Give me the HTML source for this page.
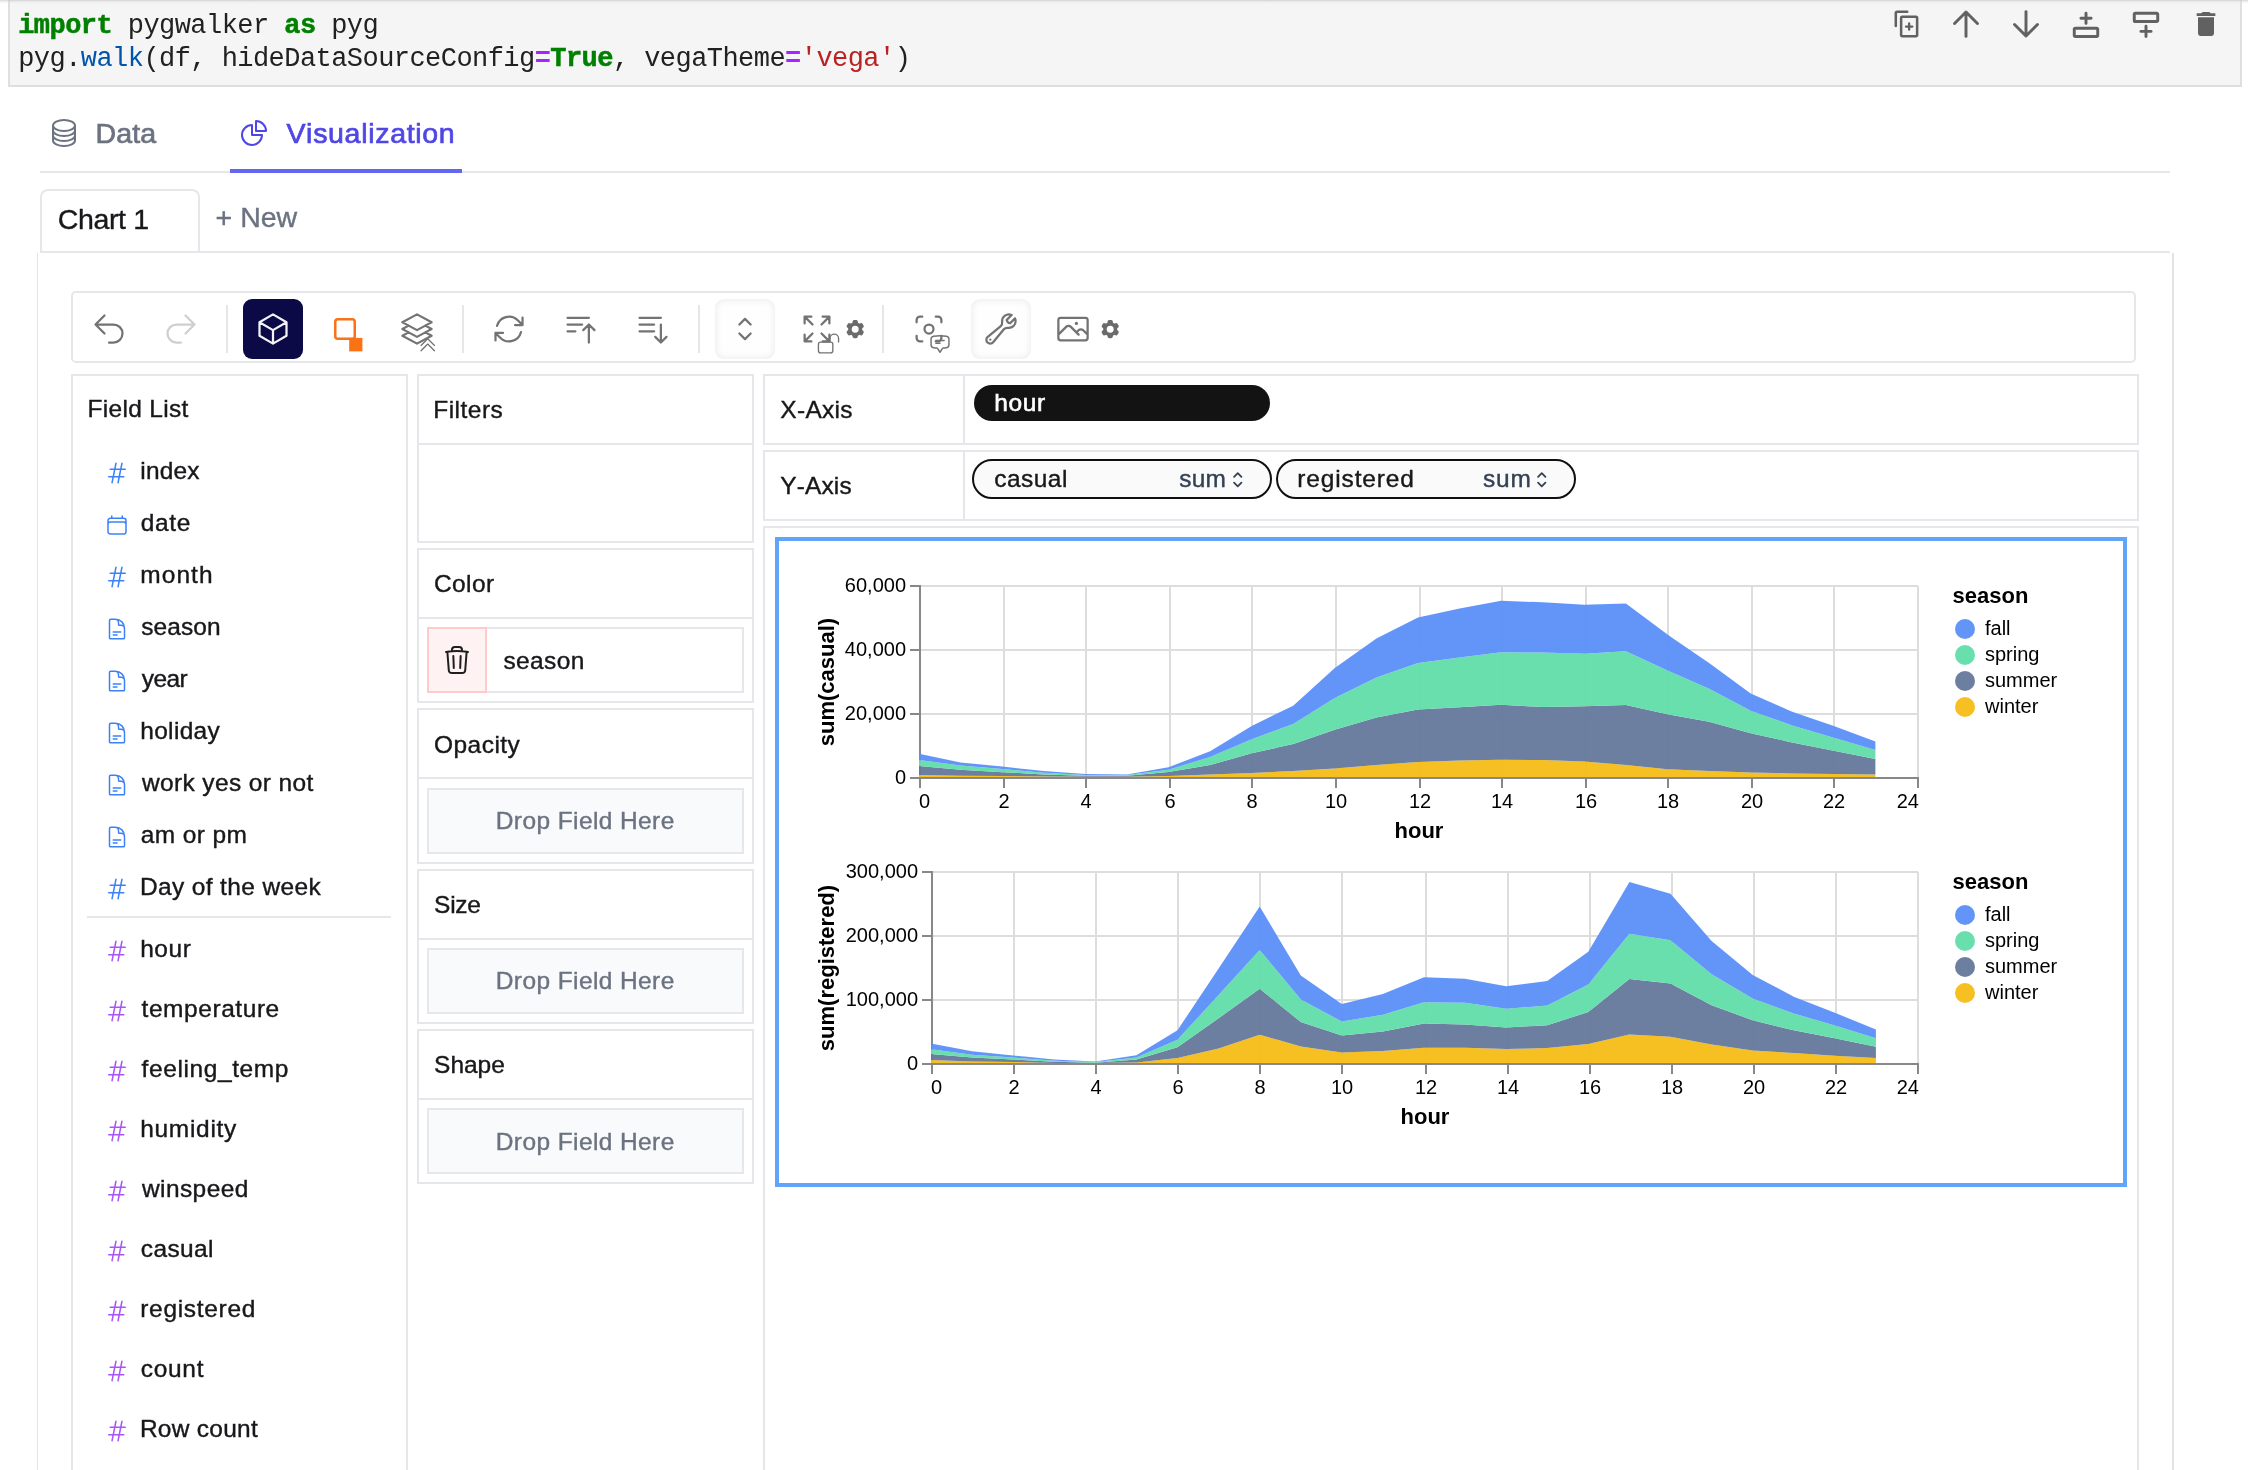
<!DOCTYPE html>
<html><head><meta charset="utf-8"><title>PyGWalker</title>
<style>
html,body{margin:0;padding:0;background:#fff;overflow:hidden;}
body{width:2248px;height:1470px;position:relative;overflow:hidden;font-family:"Liberation Sans",sans-serif;}
</style></head><body><div style="position:absolute;left:0;top:0;width:2248px;height:1470px;overflow:hidden;will-change:transform;transform:translateZ(0);">
<div style="position:absolute;left:8px;top:-2px;width:2234px;height:89px;box-sizing:border-box;background:#f5f5f5;border:2px solid #dfdfdf;"></div>
<div style="position:absolute;left:0px;top:0px;width:2248px;height:4px;box-sizing:border-box;background:linear-gradient(rgba(200,200,200,0.75),rgba(225,225,225,0.3) 50%,rgba(240,240,240,0));"></div>
<div style="position:absolute;left:18.2px;top:8.5px;font-family:'Liberation Mono',monospace;font-size:27px;letter-spacing:-0.553px;line-height:34px;white-space:pre;color:#212121;"><span style="color:#008000;font-weight:bold;-webkit-text-stroke:0.5px #008000">import</span> pygwalker <span style="color:#008000;font-weight:bold;-webkit-text-stroke:0.5px #008000">as</span> pyg</div>
<div style="position:absolute;left:18.2px;top:42.3px;font-family:'Liberation Mono',monospace;font-size:27px;letter-spacing:-0.553px;line-height:34px;white-space:pre;color:#212121;">pyg.<span style="color:#0055aa">walk</span>(df, hideDataSourceConfig<span style="color:#aa22ff;font-weight:bold">=</span><span style="color:#008000;font-weight:bold;-webkit-text-stroke:0.5px #008000">True</span>, vegaTheme<span style="color:#aa22ff;font-weight:bold">=</span><span style="color:#ba2121">'vega'</span>)</div>
<svg style="position:absolute;left:1890.7px;top:8.399999999999999px;overflow:visible" width="32" height="32" viewBox="0 0 24 24" ><path fill="none" stroke="#616161" stroke-width="1.9" stroke-linejoin="round" stroke-linecap="round" d="M3.6 13.5V3.8a1 1 0 0 1 1-1h7.6M8.4 6.6h10.4a.8.8 0 0 1 .8.8v13a.8.8 0 0 1-.8.8H8.4a.8.8 0 0 1-.8-.8v-13a.8.8 0 0 1 .8-.8z"/><path stroke="#616161" stroke-width="1.7" stroke-linecap="round" d="M11.2 13.9h4.8M13.6 11.5v4.8"/></svg>
<svg style="position:absolute;left:1950px;top:8px;overflow:visible" width="32" height="32" viewBox="0 0 24 24" ><path fill="none" stroke="#616161" stroke-width="2.2" stroke-linecap="round" stroke-linejoin="round" d="M12 21.3V3.2M3.4 11.6 12 3l8.6 8.6"/></svg>
<svg style="position:absolute;left:2010px;top:8px;overflow:visible" width="32" height="32" viewBox="0 0 24 24" ><path fill="none" stroke="#616161" stroke-width="2.2" stroke-linecap="round" stroke-linejoin="round" d="M12 2.7v18.1M3.4 12.4 12 21l8.6-8.6"/></svg>
<svg style="position:absolute;left:2070px;top:8.5px;overflow:visible" width="32" height="32" viewBox="0 0 24 24" ><path fill="none" stroke="#616161" stroke-width="2.2" stroke-linecap="round" stroke-linejoin="round" d="M4 14.4h16a.8.8 0 0 1 .8.8v4.6a.8.8 0 0 1-.8.8H4a.8.8 0 0 1-.8-.8v-4.6a.8.8 0 0 1 .8-.8zM12 3.2v7.6M8.2 7h7.6"/></svg>
<svg style="position:absolute;left:2130px;top:9px;overflow:visible" width="32" height="32" viewBox="0 0 24 24" ><path fill="none" stroke="#616161" stroke-width="2.2" stroke-linecap="round" stroke-linejoin="round" d="M4 3.2h16a.8.8 0 0 1 .8.8v4.6a.8.8 0 0 1-.8.8H4a.8.8 0 0 1-.8-.8V4a.8.8 0 0 1 .8-.8zM12 13v7.6M8.2 16.8h7.6"/></svg>
<svg style="position:absolute;left:2190px;top:8px;overflow:visible" width="32" height="32" viewBox="0 0 24 24" ><path fill="#616161" d="M6 19c0 1.1.9 2 2 2h8c1.1 0 2-.9 2-2V7H6v12zM19 4h-3.5l-1-1h-5l-1 1H5v2h14V4z"/></svg>
<div style="position:absolute;left:40px;top:171px;width:2130px;height:2px;box-sizing:border-box;background:#e5e7eb;"></div>
<div style="position:absolute;left:230px;top:169px;width:232px;height:4px;box-sizing:border-box;background:#6366f1;"></div>
<svg style="position:absolute;left:48.0px;top:117.0px;overflow:visible" width="32" height="32" viewBox="0 0 24 24" fill="none" stroke="#6b7280" stroke-width="1.5" ><path d="M20.25 6.375c0 2.278-3.694 4.125-8.25 4.125S3.75 8.653 3.75 6.375m16.5 0c0-2.278-3.694-4.125-8.25-4.125S3.75 4.097 3.75 6.375m16.5 0v11.25c0 2.278-3.694 4.125-8.25 4.125s-8.25-1.847-8.25-4.125V6.375m16.5 0v3.75m-16.5-3.75v3.75m16.5 0v3.75C20.25 16.153 16.556 18 12 18s-8.25-1.847-8.25-4.125v-3.75m16.5 0c0 2.278-3.694 4.125-8.25 4.125s-8.25-1.847-8.25-4.125" stroke-linecap="round" stroke-linejoin="round"/></svg>
<svg style="position:absolute;left:238.0px;top:117.0px;overflow:visible" width="32" height="32" viewBox="0 0 24 24" fill="none" stroke="#4f46e5" stroke-width="1.5" ><path d="M10.5 6a7.5 7.5 0 1 0 7.5 7.5h-7.5V6Z" stroke-linecap="round" stroke-linejoin="round"/><path d="M13.5 10.5H21A7.5 7.5 0 0 0 13.5 3v7.5Z" stroke-linecap="round" stroke-linejoin="round"/></svg>
<div style="position:absolute;left:95.41px;top:117px;white-space:pre;line-height:32px;height:32px;font-kerning:none;font-family:'Liberation Sans',sans-serif;font-size:28.56px;font-weight:400;color:#6b7280;letter-spacing:0.172px;-webkit-text-stroke:0.7px #6b7280;">Data</div>
<div style="position:absolute;left:286.42px;top:117px;white-space:pre;line-height:32px;height:32px;font-kerning:none;font-family:'Liberation Sans',sans-serif;font-size:28.56px;font-weight:400;color:#4f46e5;letter-spacing:0.670px;-webkit-text-stroke:0.7px #4f46e5;">Visualization</div>
<div style="position:absolute;left:40px;top:189px;width:160px;height:63px;box-sizing:border-box;background:#fff;border:2px solid #e5e7eb;border-bottom:none;border-radius:8px 8px 0 0;"></div>
<div style="position:absolute;left:40px;top:251px;width:2130px;height:2px;box-sizing:border-box;background:#e5e7eb;"></div>
<div style="position:absolute;left:57.65px;top:203px;white-space:pre;line-height:32px;height:32px;font-kerning:none;font-family:'Liberation Sans',sans-serif;font-size:28.56px;font-weight:400;color:#18181b;letter-spacing:-0.352px;-webkit-text-stroke:0.4px #18181b;">Chart 1</div>
<div style="position:absolute;left:215.61px;top:201px;white-space:pre;line-height:32px;height:32px;font-kerning:none;font-family:'Liberation Sans',sans-serif;font-size:28.56px;font-weight:400;color:#6b7280;letter-spacing:-0.031px;-webkit-text-stroke:0.4px #6b7280;">+ New</div>
<div style="position:absolute;left:36.5px;top:253px;width:1.5px;height:1300px;box-sizing:border-box;background:#e3e4e8;"></div>
<div style="position:absolute;left:2172px;top:253px;width:1.5px;height:1300px;box-sizing:border-box;background:#e3e4e8;"></div>
<div style="position:absolute;left:71px;top:291px;width:2065px;height:72px;box-sizing:border-box;border:2px solid #e5e7eb;border-radius:5px;background:#fff;"></div>
<div style="position:absolute;left:226px;top:305px;width:2px;height:48px;box-sizing:border-box;background:#e7e7e8;"></div>
<div style="position:absolute;left:462px;top:305px;width:2px;height:48px;box-sizing:border-box;background:#e7e7e8;"></div>
<div style="position:absolute;left:698px;top:305px;width:2px;height:48px;box-sizing:border-box;background:#e7e7e8;"></div>
<div style="position:absolute;left:882px;top:305px;width:2px;height:48px;box-sizing:border-box;background:#e7e7e8;"></div>
<div style="position:absolute;left:243px;top:298.8px;width:60px;height:60px;box-sizing:border-box;background:#0b0a46;border-radius:9px;"></div>
<div style="position:absolute;left:715px;top:299px;width:60px;height:60px;box-sizing:border-box;background:#fefefe;border-radius:9px;box-shadow:inset 0 0 7px 1px rgba(0,0,0,0.075);"></div>
<div style="position:absolute;left:971px;top:299px;width:60px;height:60px;box-sizing:border-box;background:#fefefe;border-radius:9px;box-shadow:inset 0 0 7px 1px rgba(0,0,0,0.075);"></div>
<svg style="position:absolute;left:91.0px;top:310.8px;overflow:visible" width="36" height="36" viewBox="0 0 24 24" fill="none" stroke="#737373" stroke-width="1.5" ><path d="M9 15 3 9m0 0 6-6M3 9h12a6 6 0 0 1 0 12h-3" stroke-linecap="round" stroke-linejoin="round"/></svg>
<svg style="position:absolute;left:163.0px;top:310.8px;overflow:visible" width="36" height="36" viewBox="0 0 24 24" fill="none" stroke="#cfcfcf" stroke-width="1.5" ><path d="m15 15 6-6m0 0-6-6m6 6H9a6 6 0 0 0 0 12h3" stroke-linecap="round" stroke-linejoin="round"/></svg>
<svg style="position:absolute;left:255.0px;top:310.8px;overflow:visible" width="36" height="36" viewBox="0 0 24 24" fill="none" stroke="#f3f3f7" stroke-width="1.5" ><path d="m21 7.5-9-5.25L3 7.5m18 0-9 5.25m9-5.25v9l-9 5.25M3 7.5l9 5.25M3 7.5v9l9 5.25m0-9v9" stroke-linecap="round" stroke-linejoin="round"/></svg>
<svg style="position:absolute;left:327px;top:310.8px;overflow:visible" width="36" height="36" viewBox="0 0 24 24" ><rect x="5.5" y="5.57" width="13" height="13" rx="1.7" fill="none" stroke="#f97316" stroke-width="1.67"/><rect x="14.8" y="17.93" width="8.8" height="9" fill="#f97316"/></svg>
<svg style="position:absolute;left:399.0px;top:310.8px;overflow:visible" width="36" height="36" viewBox="0 0 24 24" fill="none" stroke="#737373" stroke-width="1.5" ><path d="M6.429 9.75 2.25 12l4.179 2.25m0-4.5 5.571 3 5.571-3m-11.142 0L2.25 7.5 12 2.25l9.75 5.25-4.179 2.25m0 0L21.75 12l-4.179 2.25m0 0 4.179 2.25L12 21.75 2.25 16.5l4.179-2.25m11.142 0-5.571 3-5.571-3" stroke-linecap="round" stroke-linejoin="round"/></svg>
<svg style="position:absolute;left:417.4px;top:333.75px;overflow:visible" width="21.5" height="21.5" viewBox="0 0 24 24" fill="none" stroke="#737373" stroke-width="1.45" ><path d="m4.5 18.75 7.5-7.5 7.5 7.5" stroke-linecap="round" stroke-linejoin="round"/><path d="m4.5 12.75 7.5-7.5 7.5 7.5" stroke-linecap="round" stroke-linejoin="round"/></svg>
<svg style="position:absolute;left:491.0px;top:310.8px;overflow:visible" width="36" height="36" viewBox="0 0 24 24" fill="none" stroke="#737373" stroke-width="1.5" ><path d="M16.023 9.348h4.992v-.001M2.985 19.644v-4.992m0 0h4.992m-4.993 0 3.181 3.183a8.25 8.25 0 0 0 13.803-3.7M4.031 9.865a8.25 8.25 0 0 1 13.803-3.7l3.181 3.182m0-4.991v4.99" stroke-linecap="round" stroke-linejoin="round"/></svg>
<svg style="position:absolute;left:563.0px;top:310.8px;overflow:visible" width="36" height="36" viewBox="0 0 24 24" fill="none" stroke="#737373" stroke-width="1.5" ><path d="M3 4.5h14.25M3 9h9.75M3 13.5h5.25m5.25-.75L17.25 9m0 0L21 12.75M17.25 9v12" stroke-linecap="round" stroke-linejoin="round"/></svg>
<svg style="position:absolute;left:635.0px;top:310.8px;overflow:visible" width="36" height="36" viewBox="0 0 24 24" fill="none" stroke="#737373" stroke-width="1.5" ><path d="M3 4.5h14.25M3 9h9.75M3 13.5h9.75m4.5-4.5v12m0 0-3.75-3.75M17.25 21 21 17.25" stroke-linecap="round" stroke-linejoin="round"/></svg>
<svg style="position:absolute;left:727.0px;top:310.8px;overflow:visible" width="36" height="36" viewBox="0 0 24 24" fill="none" stroke="#737373" stroke-width="1.5" ><path d="M8.25 15 12 18.75 15.75 15m-7.5-6L12 5.25 15.75 9" stroke-linecap="round" stroke-linejoin="round"/></svg>
<svg style="position:absolute;left:799.0px;top:310.8px;overflow:visible" width="36" height="36" viewBox="0 0 24 24" fill="none" stroke="#737373" stroke-width="1.5" ><path d="M3.75 3.75v4.5m0-4.5h4.5m-4.5 0L9 9M3.75 20.25v-4.5m0 4.5h4.5m-4.5 0L9 15M20.25 3.75h-4.5m4.500 0v4.5m0-4.5L15 9m5.25 11.250h-4.5m4.5 0v-4.5m0 4.5L15 15" stroke-linecap="round" stroke-linejoin="round"/></svg>
<svg style="position:absolute;left:816.6px;top:332.1px;overflow:visible" width="23" height="23" viewBox="0 0 24 24" fill="none" stroke="#737373" stroke-width="1.4" ><path d="M13.5 10.5V6.75a4.5 4.5 0 1 1 9 0v3.75M3.75 21.75h10.5a2.25 2.25 0 0 0 2.25-2.25v-6.75a2.25 2.25 0 0 0-2.25-2.25H3.75a2.25 2.25 0 0 0-2.25 2.25v6.75a2.25 2.25 0 0 0 2.25 2.25Z" stroke-linecap="round" stroke-linejoin="round"/></svg>
<svg style="position:absolute;left:843.5999999999999px;top:317.90000000000003px;overflow:visible" width="22.4" height="22.4" viewBox="0 0 24 24" ><path fill="#6b6b6b" fill-rule="evenodd" clip-rule="evenodd" d="M11.078 2.25c-.917 0-1.699.663-1.85 1.567L9.05 4.889c-.02.12-.115.26-.297.348a7.493 7.493 0 0 0-.986.57c-.166.115-.334.126-.45.083L6.3 5.508a1.875 1.875 0 0 0-2.282.819l-.922 1.597a1.875 1.875 0 0 0 .432 2.385l.84.692c.095.078.17.229.154.43a7.598 7.598 0 0 0 0 1.139c.015.2-.059.352-.153.43l-.841.692a1.875 1.875 0 0 0-.432 2.385l.922 1.597a1.875 1.875 0 0 0 2.282.818l1.019-.382c.115-.043.283-.031.45.082.312.214.641.405.985.57.182.088.277.228.297.35l.178 1.071c.151.904.933 1.567 1.85 1.567h1.844c.916 0 1.699-.663 1.85-1.567l.178-1.072c.02-.12.114-.26.297-.349.344-.165.673-.356.985-.57.167-.114.335-.125.45-.082l1.02.382a1.875 1.875 0 0 0 2.28-.819l.923-1.597a1.875 1.875 0 0 0-.432-2.385l-.84-.692c-.095-.078-.17-.229-.154-.43a7.614 7.614 0 0 0 0-1.139c-.016-.2.059-.352.153-.43l.84-.692c.708-.582.891-1.59.433-2.385l-.922-1.597a1.875 1.875 0 0 0-2.282-.818l-1.02.382c-.114.043-.282.031-.449-.083a7.49 7.49 0 0 0-.985-.57c-.183-.087-.277-.227-.297-.348l-.179-1.072a1.875 1.875 0 0 0-1.85-1.567h-1.843ZM12 15.75a3.75 3.75 0 1 0 0-7.5 3.75 3.75 0 0 0 0 7.5Z"/></svg>
<svg style="position:absolute;left:911.0px;top:310.8px;overflow:visible" width="36" height="36" viewBox="0 0 24 24" fill="none" stroke="#737373" stroke-width="1.5" ><path d="M7.5 3.75H6A2.25 2.25 0 0 0 3.75 6v1.5M16.5 3.75H18A2.25 2.25 0 0 1 20.25 6v1.5m0 9V18A2.25 2.25 0 0 1 18 20.25h-1.5m-9 0H6A2.25 2.25 0 0 1 3.750 18v-1.5M15 12a3 3 0 1 1-6 0 3 3 0 0 1 6 0Z" stroke-linecap="round" stroke-linejoin="round"/></svg>
<svg style="position:absolute;left:929.0px;top:332.7px;overflow:visible" width="22" height="22" viewBox="0 0 24 24" fill="none" stroke="#737373" stroke-width="1.6" ><path d="M7.5 8.25h9m-9 3H12m-9.75 1.51c0 1.6 1.123 2.994 2.707 3.227 1.129.166 2.27.293 3.423.379.35.026.67.21.865.501L12 21l2.755-4.133a1.14 1.14 0 0 1 .865-.501 48.172 48.172 0 0 0 3.423-.379c1.584-.233 2.707-1.626 2.707-3.228V6.741c0-1.602-1.123-2.995-2.707-3.228A48.394 48.394 0 0 0 12 3c-2.392 0-4.744.175-7.043.513C3.373 3.746 2.25 5.14 2.25 6.741v6.018Z" stroke-linecap="round" stroke-linejoin="round"/></svg>
<svg style="position:absolute;left:983.0px;top:310.8px;overflow:visible" width="36" height="36" viewBox="0 0 24 24" fill="none" stroke="#737373" stroke-width="1.5" ><path d="M21.75 6.75a4.5 4.5 0 0 1-4.884 4.484c-1.076-.091-2.264.071-2.95.904l-7.152 8.684a2.548 2.548 0 1 1-3.586-3.586l8.684-7.152c.833-.686.995-1.874.904-2.95a4.5 4.5 0 0 1 6.336-4.486l-3.276 3.276a3.004 3.004 0 0 0 2.25 2.25l3.276-3.276c.256.565.398 1.192.398 1.852Z" stroke-linecap="round" stroke-linejoin="round"/><path d="M4.867 19.125h.008v.008h-.008v-.008Z" stroke-linecap="round" stroke-linejoin="round"/></svg>
<svg style="position:absolute;left:1055.0px;top:310.8px;overflow:visible" width="36" height="36" viewBox="0 0 24 24" fill="none" stroke="#737373" stroke-width="1.5" ><path d="m2.25 15.75 5.159-5.159a2.25 2.25 0 0 1 3.182 0l5.159 5.159m-1.5-1.5 1.409-1.409a2.250 2.250 0 0 1 3.182 0l2.909 2.909m-18 3.75h16.5a1.5 1.5 0 0 0 1.5-1.5V6a1.5 1.5 0 0 0-1.5-1.5H3.75A1.5 1.5 0 0 0 2.250 6v12a1.5 1.5 0 0 0 1.5 1.5Zm10.5-11.25h.008v.008h-.008V8.25Zm.375 0a.375.375 0 1 1-.75 0 .375.375 0 0 1 .75 0Z" stroke-linecap="round" stroke-linejoin="round"/></svg>
<svg style="position:absolute;left:1099.3999999999999px;top:317.90000000000003px;overflow:visible" width="22.4" height="22.4" viewBox="0 0 24 24" ><path fill="#6b6b6b" fill-rule="evenodd" clip-rule="evenodd" d="M11.078 2.25c-.917 0-1.699.663-1.85 1.567L9.05 4.889c-.02.12-.115.26-.297.348a7.493 7.493 0 0 0-.986.57c-.166.115-.334.126-.45.083L6.3 5.508a1.875 1.875 0 0 0-2.282.819l-.922 1.597a1.875 1.875 0 0 0 .432 2.385l.84.692c.095.078.17.229.154.43a7.598 7.598 0 0 0 0 1.139c.015.2-.059.352-.153.43l-.841.692a1.875 1.875 0 0 0-.432 2.385l.922 1.597a1.875 1.875 0 0 0 2.282.818l1.019-.382c.115-.043.283-.031.45.082.312.214.641.405.985.57.182.088.277.228.297.35l.178 1.071c.151.904.933 1.567 1.85 1.567h1.844c.916 0 1.699-.663 1.85-1.567l.178-1.072c.02-.12.114-.26.297-.349.344-.165.673-.356.985-.57.167-.114.335-.125.45-.082l1.02.382a1.875 1.875 0 0 0 2.28-.819l.923-1.597a1.875 1.875 0 0 0-.432-2.385l-.84-.692c-.095-.078-.17-.229-.154-.43a7.614 7.614 0 0 0 0-1.139c-.016-.2.059-.352.153-.43l.84-.692c.708-.582.891-1.59.433-2.385l-.922-1.597a1.875 1.875 0 0 0-2.282-.818l-1.02.382c-.114.043-.282.031-.449-.083a7.49 7.49 0 0 0-.985-.57c-.183-.087-.277-.227-.297-.348l-.179-1.072a1.875 1.875 0 0 0-1.85-1.567h-1.843ZM12 15.75a3.75 3.75 0 1 0 0-7.5 3.75 3.75 0 0 0 0 7.5Z"/></svg>
<div style="position:absolute;left:71px;top:374px;width:337px;height:1200px;box-sizing:border-box;border:2px solid #e5e7eb;background:#fff;"></div>
<div style="position:absolute;left:87.59px;top:395px;white-space:pre;line-height:27px;height:27px;font-kerning:none;font-family:'Liberation Sans',sans-serif;font-size:24.48px;font-weight:400;color:#18181b;letter-spacing:0.304px;-webkit-text-stroke:0.4px #18181b;">Field List</div>
<svg style="position:absolute;left:105.1px;top:460.9px;overflow:visible" width="24" height="24" viewBox="0 0 24 24" fill="none" stroke="#3b82f6" stroke-width="1.5" ><path d="M5.25 8.25h15m-16.5 7.5h15m-1.8-13.5-3.9 19.5m-2.1-19.5-3.9 19.5" stroke-linecap="round" stroke-linejoin="round"/></svg>
<div style="position:absolute;left:140.26px;top:457px;white-space:pre;line-height:27px;height:27px;font-kerning:none;font-family:'Liberation Sans',sans-serif;font-size:24.48px;font-weight:400;color:#18181b;letter-spacing:0.195px;-webkit-text-stroke:0.4px #18181b;">index</div>
<svg style="position:absolute;left:105.1px;top:512.9px;overflow:visible" width="24" height="24" viewBox="0 0 24 24" fill="none" stroke="#3b82f6" stroke-width="1.5" ><path d="M6.75 3v2.25M17.25 3v2.25M3 18.750V7.5a2.25 2.25 0 0 1 2.25-2.25h13.5A2.250 2.250 0 0 1 21 7.5v11.25m-18 0A2.25 2.25 0 0 0 5.25 21h13.5A2.25 2.25 0 0 0 21 18.75m-18 0v-7.5A2.25 2.25 0 0 1 5.250 9h13.5A2.25 2.25 0 0 1 21 11.25v7.5" stroke-linecap="round" stroke-linejoin="round"/></svg>
<div style="position:absolute;left:140.87px;top:509px;white-space:pre;line-height:27px;height:27px;font-kerning:none;font-family:'Liberation Sans',sans-serif;font-size:24.48px;font-weight:400;color:#18181b;letter-spacing:0.624px;-webkit-text-stroke:0.4px #18181b;">date</div>
<svg style="position:absolute;left:105.1px;top:564.9px;overflow:visible" width="24" height="24" viewBox="0 0 24 24" fill="none" stroke="#3b82f6" stroke-width="1.5" ><path d="M5.25 8.25h15m-16.5 7.5h15m-1.8-13.5-3.9 19.5m-2.1-19.5-3.9 19.5" stroke-linecap="round" stroke-linejoin="round"/></svg>
<div style="position:absolute;left:140.27px;top:561px;white-space:pre;line-height:27px;height:27px;font-kerning:none;font-family:'Liberation Sans',sans-serif;font-size:24.48px;font-weight:400;color:#18181b;letter-spacing:1.070px;-webkit-text-stroke:0.4px #18181b;">month</div>
<svg style="position:absolute;left:105.1px;top:616.9px;overflow:visible" width="24" height="24" viewBox="0 0 24 24" fill="none" stroke="#3b82f6" stroke-width="1.5" ><path d="M19.5 14.25v-2.625a3.375 3.375 0 0 0-3.375-3.375h-1.5A1.125 1.125 0 0 1 13.5 7.125v-1.5a3.375 3.375 0 0 0-3.375-3.375H8.25m0 12.75h7.5m-7.5 3H12M10.5 2.250H5.625c-.621 0-1.125.504-1.125 1.125v17.25c0 .621.504 1.125 1.125 1.125h12.75c.621 0 1.125-.504 1.125-1.125V11.250a9 9 0 0 0-9-9Z" stroke-linecap="round" stroke-linejoin="round"/></svg>
<div style="position:absolute;left:141.22px;top:613px;white-space:pre;line-height:27px;height:27px;font-kerning:none;font-family:'Liberation Sans',sans-serif;font-size:24.48px;font-weight:400;color:#18181b;letter-spacing:0.087px;-webkit-text-stroke:0.4px #18181b;">season</div>
<svg style="position:absolute;left:105.1px;top:668.9px;overflow:visible" width="24" height="24" viewBox="0 0 24 24" fill="none" stroke="#3b82f6" stroke-width="1.5" ><path d="M19.5 14.25v-2.625a3.375 3.375 0 0 0-3.375-3.375h-1.5A1.125 1.125 0 0 1 13.5 7.125v-1.5a3.375 3.375 0 0 0-3.375-3.375H8.25m0 12.75h7.5m-7.5 3H12M10.5 2.250H5.625c-.621 0-1.125.504-1.125 1.125v17.25c0 .621.504 1.125 1.125 1.125h12.75c.621 0 1.125-.504 1.125-1.125V11.250a9 9 0 0 0-9-9Z" stroke-linecap="round" stroke-linejoin="round"/></svg>
<div style="position:absolute;left:141.84px;top:665px;white-space:pre;line-height:27px;height:27px;font-kerning:none;font-family:'Liberation Sans',sans-serif;font-size:24.48px;font-weight:400;color:#18181b;letter-spacing:-0.552px;-webkit-text-stroke:0.4px #18181b;">year</div>
<svg style="position:absolute;left:105.1px;top:720.9px;overflow:visible" width="24" height="24" viewBox="0 0 24 24" fill="none" stroke="#3b82f6" stroke-width="1.5" ><path d="M19.5 14.25v-2.625a3.375 3.375 0 0 0-3.375-3.375h-1.5A1.125 1.125 0 0 1 13.5 7.125v-1.5a3.375 3.375 0 0 0-3.375-3.375H8.25m0 12.75h7.5m-7.5 3H12M10.5 2.250H5.625c-.621 0-1.125.504-1.125 1.125v17.25c0 .621.504 1.125 1.125 1.125h12.75c.621 0 1.125-.504 1.125-1.125V11.250a9 9 0 0 0-9-9Z" stroke-linecap="round" stroke-linejoin="round"/></svg>
<div style="position:absolute;left:140.20px;top:717px;white-space:pre;line-height:27px;height:27px;font-kerning:none;font-family:'Liberation Sans',sans-serif;font-size:24.48px;font-weight:400;color:#18181b;letter-spacing:0.345px;-webkit-text-stroke:0.4px #18181b;">holiday</div>
<svg style="position:absolute;left:105.1px;top:772.9px;overflow:visible" width="24" height="24" viewBox="0 0 24 24" fill="none" stroke="#3b82f6" stroke-width="1.5" ><path d="M19.5 14.25v-2.625a3.375 3.375 0 0 0-3.375-3.375h-1.5A1.125 1.125 0 0 1 13.5 7.125v-1.5a3.375 3.375 0 0 0-3.375-3.375H8.25m0 12.75h7.5m-7.5 3H12M10.5 2.250H5.625c-.621 0-1.125.504-1.125 1.125v17.25c0 .621.504 1.125 1.125 1.125h12.75c.621 0 1.125-.504 1.125-1.125V11.250a9 9 0 0 0-9-9Z" stroke-linecap="round" stroke-linejoin="round"/></svg>
<div style="position:absolute;left:141.94px;top:769px;white-space:pre;line-height:27px;height:27px;font-kerning:none;font-family:'Liberation Sans',sans-serif;font-size:24.48px;font-weight:400;color:#18181b;letter-spacing:0.383px;-webkit-text-stroke:0.4px #18181b;">work yes or not</div>
<svg style="position:absolute;left:105.1px;top:824.9px;overflow:visible" width="24" height="24" viewBox="0 0 24 24" fill="none" stroke="#3b82f6" stroke-width="1.5" ><path d="M19.5 14.25v-2.625a3.375 3.375 0 0 0-3.375-3.375h-1.5A1.125 1.125 0 0 1 13.5 7.125v-1.5a3.375 3.375 0 0 0-3.375-3.375H8.25m0 12.75h7.5m-7.5 3H12M10.5 2.250H5.625c-.621 0-1.125.504-1.125 1.125v17.25c0 .621.504 1.125 1.125 1.125h12.75c.621 0 1.125-.504 1.125-1.125V11.250a9 9 0 0 0-9-9Z" stroke-linecap="round" stroke-linejoin="round"/></svg>
<div style="position:absolute;left:140.86px;top:821px;white-space:pre;line-height:27px;height:27px;font-kerning:none;font-family:'Liberation Sans',sans-serif;font-size:24.48px;font-weight:400;color:#18181b;letter-spacing:0.382px;-webkit-text-stroke:0.4px #18181b;">am or pm</div>
<svg style="position:absolute;left:105.1px;top:876.9px;overflow:visible" width="24" height="24" viewBox="0 0 24 24" fill="none" stroke="#3b82f6" stroke-width="1.5" ><path d="M5.25 8.25h15m-16.5 7.5h15m-1.8-13.5-3.9 19.5m-2.1-19.5-3.9 19.5" stroke-linecap="round" stroke-linejoin="round"/></svg>
<div style="position:absolute;left:139.89px;top:873px;white-space:pre;line-height:27px;height:27px;font-kerning:none;font-family:'Liberation Sans',sans-serif;font-size:24.48px;font-weight:400;color:#18181b;letter-spacing:0.381px;-webkit-text-stroke:0.4px #18181b;">Day of the week</div>
<div style="position:absolute;left:87px;top:916px;width:304px;height:2px;box-sizing:border-box;background:#e5e7eb;"></div>
<svg style="position:absolute;left:105.1px;top:938.9px;overflow:visible" width="24" height="24" viewBox="0 0 24 24" fill="none" stroke="#a855f7" stroke-width="1.5" ><path d="M5.25 8.25h15m-16.5 7.5h15m-1.8-13.5-3.9 19.5m-2.1-19.5-3.9 19.5" stroke-linecap="round" stroke-linejoin="round"/></svg>
<div style="position:absolute;left:140.20px;top:935px;white-space:pre;line-height:27px;height:27px;font-kerning:none;font-family:'Liberation Sans',sans-serif;font-size:24.48px;font-weight:400;color:#18181b;letter-spacing:0.569px;-webkit-text-stroke:0.4px #18181b;">hour</div>
<svg style="position:absolute;left:105.1px;top:998.9px;overflow:visible" width="24" height="24" viewBox="0 0 24 24" fill="none" stroke="#a855f7" stroke-width="1.5" ><path d="M5.25 8.25h15m-16.5 7.5h15m-1.8-13.5-3.9 19.5m-2.1-19.5-3.9 19.5" stroke-linecap="round" stroke-linejoin="round"/></svg>
<div style="position:absolute;left:141.53px;top:995px;white-space:pre;line-height:27px;height:27px;font-kerning:none;font-family:'Liberation Sans',sans-serif;font-size:24.48px;font-weight:400;color:#18181b;letter-spacing:0.577px;-webkit-text-stroke:0.4px #18181b;">temperature</div>
<svg style="position:absolute;left:105.1px;top:1058.9px;overflow:visible" width="24" height="24" viewBox="0 0 24 24" fill="none" stroke="#a855f7" stroke-width="1.5" ><path d="M5.25 8.25h15m-16.5 7.5h15m-1.8-13.5-3.9 19.5m-2.1-19.5-3.9 19.5" stroke-linecap="round" stroke-linejoin="round"/></svg>
<div style="position:absolute;left:141.55px;top:1055px;white-space:pre;line-height:27px;height:27px;font-kerning:none;font-family:'Liberation Sans',sans-serif;font-size:24.48px;font-weight:400;color:#18181b;letter-spacing:0.618px;-webkit-text-stroke:0.4px #18181b;">feeling_temp</div>
<svg style="position:absolute;left:105.1px;top:1118.9px;overflow:visible" width="24" height="24" viewBox="0 0 24 24" fill="none" stroke="#a855f7" stroke-width="1.5" ><path d="M5.25 8.25h15m-16.5 7.5h15m-1.8-13.5-3.9 19.5m-2.1-19.5-3.9 19.5" stroke-linecap="round" stroke-linejoin="round"/></svg>
<div style="position:absolute;left:140.20px;top:1115px;white-space:pre;line-height:27px;height:27px;font-kerning:none;font-family:'Liberation Sans',sans-serif;font-size:24.48px;font-weight:400;color:#18181b;letter-spacing:0.713px;-webkit-text-stroke:0.4px #18181b;">humidity</div>
<svg style="position:absolute;left:105.1px;top:1178.9px;overflow:visible" width="24" height="24" viewBox="0 0 24 24" fill="none" stroke="#a855f7" stroke-width="1.5" ><path d="M5.25 8.25h15m-16.5 7.5h15m-1.8-13.5-3.9 19.5m-2.1-19.5-3.9 19.5" stroke-linecap="round" stroke-linejoin="round"/></svg>
<div style="position:absolute;left:141.94px;top:1175px;white-space:pre;line-height:27px;height:27px;font-kerning:none;font-family:'Liberation Sans',sans-serif;font-size:24.48px;font-weight:400;color:#18181b;letter-spacing:0.430px;-webkit-text-stroke:0.4px #18181b;">winspeed</div>
<svg style="position:absolute;left:105.1px;top:1238.9px;overflow:visible" width="24" height="24" viewBox="0 0 24 24" fill="none" stroke="#a855f7" stroke-width="1.5" ><path d="M5.25 8.25h15m-16.5 7.5h15m-1.8-13.5-3.9 19.5m-2.1-19.5-3.9 19.5" stroke-linecap="round" stroke-linejoin="round"/></svg>
<div style="position:absolute;left:140.86px;top:1235px;white-space:pre;line-height:27px;height:27px;font-kerning:none;font-family:'Liberation Sans',sans-serif;font-size:24.48px;font-weight:400;color:#18181b;letter-spacing:0.363px;-webkit-text-stroke:0.4px #18181b;">casual</div>
<svg style="position:absolute;left:105.1px;top:1298.9px;overflow:visible" width="24" height="24" viewBox="0 0 24 24" fill="none" stroke="#a855f7" stroke-width="1.5" ><path d="M5.25 8.25h15m-16.5 7.5h15m-1.8-13.5-3.9 19.5m-2.1-19.5-3.9 19.5" stroke-linecap="round" stroke-linejoin="round"/></svg>
<div style="position:absolute;left:140.27px;top:1295px;white-space:pre;line-height:27px;height:27px;font-kerning:none;font-family:'Liberation Sans',sans-serif;font-size:24.48px;font-weight:400;color:#18181b;letter-spacing:0.694px;-webkit-text-stroke:0.4px #18181b;">registered</div>
<svg style="position:absolute;left:105.1px;top:1358.9px;overflow:visible" width="24" height="24" viewBox="0 0 24 24" fill="none" stroke="#a855f7" stroke-width="1.5" ><path d="M5.25 8.25h15m-16.5 7.5h15m-1.8-13.5-3.9 19.5m-2.1-19.5-3.9 19.5" stroke-linecap="round" stroke-linejoin="round"/></svg>
<div style="position:absolute;left:140.86px;top:1355px;white-space:pre;line-height:27px;height:27px;font-kerning:none;font-family:'Liberation Sans',sans-serif;font-size:24.48px;font-weight:400;color:#18181b;letter-spacing:0.684px;-webkit-text-stroke:0.4px #18181b;">count</div>
<svg style="position:absolute;left:105.1px;top:1418.9px;overflow:visible" width="24" height="24" viewBox="0 0 24 24" fill="none" stroke="#a855f7" stroke-width="1.5" ><path d="M5.25 8.25h15m-16.5 7.5h15m-1.8-13.5-3.9 19.5m-2.1-19.5-3.9 19.5" stroke-linecap="round" stroke-linejoin="round"/></svg>
<div style="position:absolute;left:139.89px;top:1415px;white-space:pre;line-height:27px;height:27px;font-kerning:none;font-family:'Liberation Sans',sans-serif;font-size:24.48px;font-weight:400;color:#18181b;letter-spacing:0.279px;-webkit-text-stroke:0.4px #18181b;">Row count</div>
<div style="position:absolute;left:417px;top:374px;width:337px;height:169px;box-sizing:border-box;border:2px solid #e5e7eb;background:#fff;"></div>
<div style="position:absolute;left:417px;top:443px;width:337px;height:2px;box-sizing:border-box;background:#e5e7eb;"></div>
<div style="position:absolute;left:433.19px;top:396px;white-space:pre;line-height:27px;height:27px;font-kerning:none;font-family:'Liberation Sans',sans-serif;font-size:24.48px;font-weight:400;color:#18181b;letter-spacing:0.509px;-webkit-text-stroke:0.4px #18181b;">Filters</div>
<div style="position:absolute;left:417px;top:548px;width:337px;height:155px;box-sizing:border-box;border:2px solid #e5e7eb;background:#fff;"></div>
<div style="position:absolute;left:417px;top:617px;width:337px;height:2px;box-sizing:border-box;background:#e5e7eb;"></div>
<div style="position:absolute;left:433.96px;top:570px;white-space:pre;line-height:27px;height:27px;font-kerning:none;font-family:'Liberation Sans',sans-serif;font-size:24.48px;font-weight:400;color:#18181b;letter-spacing:0.413px;-webkit-text-stroke:0.4px #18181b;">Color</div>
<div style="position:absolute;left:417px;top:708px;width:337px;height:156px;box-sizing:border-box;border:2px solid #e5e7eb;background:#fff;"></div>
<div style="position:absolute;left:417px;top:777px;width:337px;height:2px;box-sizing:border-box;background:#e5e7eb;"></div>
<div style="position:absolute;left:434.04px;top:731px;white-space:pre;line-height:27px;height:27px;font-kerning:none;font-family:'Liberation Sans',sans-serif;font-size:24.48px;font-weight:400;color:#18181b;letter-spacing:0.469px;-webkit-text-stroke:0.4px #18181b;">Opacity</div>
<div style="position:absolute;left:417px;top:869px;width:337px;height:154.8px;box-sizing:border-box;border:2px solid #e5e7eb;background:#fff;"></div>
<div style="position:absolute;left:417px;top:938px;width:337px;height:2px;box-sizing:border-box;background:#e5e7eb;"></div>
<div style="position:absolute;left:434.09px;top:891px;white-space:pre;line-height:27px;height:27px;font-kerning:none;font-family:'Liberation Sans',sans-serif;font-size:24.48px;font-weight:400;color:#18181b;letter-spacing:-0.241px;-webkit-text-stroke:0.4px #18181b;">Size</div>
<div style="position:absolute;left:417px;top:1029px;width:337px;height:154.8px;box-sizing:border-box;border:2px solid #e5e7eb;background:#fff;"></div>
<div style="position:absolute;left:417px;top:1098px;width:337px;height:2px;box-sizing:border-box;background:#e5e7eb;"></div>
<div style="position:absolute;left:434.09px;top:1051px;white-space:pre;line-height:27px;height:27px;font-kerning:none;font-family:'Liberation Sans',sans-serif;font-size:24.48px;font-weight:400;color:#18181b;letter-spacing:-0.022px;-webkit-text-stroke:0.4px #18181b;">Shape</div>
<div style="position:absolute;left:427px;top:627px;width:317px;height:66px;box-sizing:border-box;border:2px solid #e5e7eb;background:#fff;"></div>
<div style="position:absolute;left:427px;top:627px;width:60px;height:66px;box-sizing:border-box;border:2px solid #fecaca;background:#fef2f2;"></div>
<svg style="position:absolute;left:441.0px;top:644.0px;overflow:visible" width="32" height="32" viewBox="0 0 24 24" fill="none" stroke="#1f1f1f" stroke-width="1.5" ><path d="m14.74 9-.346 9m-4.788 0L9.26 9m9.968-3.21c.342.052.682.107 1.022.166m-1.022-.165L18.16 19.673a2.25 2.25 0 0 1-2.244 2.077H8.084a2.25 2.25 0 0 1-2.244-2.077L4.772 5.79m14.456 0a48.108 48.108 0 0 0-3.478-.397m-12 .562c.34-.059.68-.114 1.022-.165m0 0a48.11 48.11 0 0 1 3.478-.397m7.5 0v-.916c0-1.18-.91-2.164-2.09-2.201a51.964 51.964 0 0 0-3.32 0c-1.18.037-2.09 1.022-2.09 2.201v.916m7.5 0a48.667 48.667 0 0 0-7.5 0" stroke-linecap="round" stroke-linejoin="round"/></svg>
<div style="position:absolute;left:503.42px;top:647px;white-space:pre;line-height:27px;height:27px;font-kerning:none;font-family:'Liberation Sans',sans-serif;font-size:24.48px;font-weight:400;color:#18181b;letter-spacing:0.387px;-webkit-text-stroke:0.4px #18181b;">season</div>
<div style="position:absolute;left:427px;top:788px;width:317px;height:65.8px;box-sizing:border-box;border:2px solid #e5e7eb;background:#f9fafb;"></div>
<div style="position:absolute;left:495.79px;top:807px;white-space:pre;line-height:27px;height:27px;font-kerning:none;font-family:'Liberation Sans',sans-serif;font-size:24.48px;font-weight:400;color:#6b7280;letter-spacing:0.415px;-webkit-text-stroke:0.4px #6b7280;">Drop Field Here</div>
<div style="position:absolute;left:427px;top:948.2px;width:317px;height:65.8px;box-sizing:border-box;border:2px solid #e5e7eb;background:#f9fafb;"></div>
<div style="position:absolute;left:495.79px;top:967px;white-space:pre;line-height:27px;height:27px;font-kerning:none;font-family:'Liberation Sans',sans-serif;font-size:24.48px;font-weight:400;color:#6b7280;letter-spacing:0.415px;-webkit-text-stroke:0.4px #6b7280;">Drop Field Here</div>
<div style="position:absolute;left:427px;top:1108.2px;width:317px;height:65.8px;box-sizing:border-box;border:2px solid #e5e7eb;background:#f9fafb;"></div>
<div style="position:absolute;left:495.79px;top:1128px;white-space:pre;line-height:27px;height:27px;font-kerning:none;font-family:'Liberation Sans',sans-serif;font-size:24.48px;font-weight:400;color:#6b7280;letter-spacing:0.415px;-webkit-text-stroke:0.4px #6b7280;">Drop Field Here</div>
<div style="position:absolute;left:763px;top:374px;width:1376px;height:71px;box-sizing:border-box;border:2px solid #e5e7eb;background:#fff;"></div>
<div style="position:absolute;left:963px;top:374px;width:2px;height:71px;box-sizing:border-box;background:#e5e7eb;"></div>
<div style="position:absolute;left:780.35px;top:396px;white-space:pre;line-height:27px;height:27px;font-kerning:none;font-family:'Liberation Sans',sans-serif;font-size:24.48px;font-weight:400;color:#18181b;letter-spacing:0.282px;-webkit-text-stroke:0.4px #18181b;">X-Axis</div>
<div style="position:absolute;left:763px;top:450px;width:1376px;height:70.5px;box-sizing:border-box;border:2px solid #e5e7eb;background:#fff;"></div>
<div style="position:absolute;left:963px;top:450px;width:2px;height:70.5px;box-sizing:border-box;background:#e5e7eb;"></div>
<div style="position:absolute;left:780.36px;top:472px;white-space:pre;line-height:27px;height:27px;font-kerning:none;font-family:'Liberation Sans',sans-serif;font-size:24.48px;font-weight:400;color:#18181b;letter-spacing:0.119px;-webkit-text-stroke:0.4px #18181b;">Y-Axis</div>
<div style="position:absolute;left:974px;top:385.3px;width:296px;height:35.6px;box-sizing:border-box;background:#131313;border-radius:18px;"></div>
<div style="position:absolute;left:994.30px;top:389px;white-space:pre;line-height:27px;height:27px;font-kerning:none;font-family:'Liberation Sans',sans-serif;font-size:24.48px;font-weight:400;color:#ffffff;letter-spacing:0.636px;-webkit-text-stroke:0.6px #ffffff;">hour</div>
<div style="position:absolute;left:972.2px;top:459px;width:299.6px;height:40px;box-sizing:border-box;border:2px solid #101010;border-radius:20px;background:#fafafa;"></div>
<div style="position:absolute;left:994.16px;top:465px;white-space:pre;line-height:27px;height:27px;font-kerning:none;font-family:'Liberation Sans',sans-serif;font-size:24.48px;font-weight:400;color:#18181b;letter-spacing:0.503px;-webkit-text-stroke:0.4px #18181b;">casual</div>
<div style="position:absolute;left:1179.22px;top:465px;white-space:pre;line-height:27px;height:27px;font-kerning:none;font-family:'Liberation Sans',sans-serif;font-size:24.48px;font-weight:400;color:#334155;letter-spacing:0.274px;-webkit-text-stroke:0.4px #334155;">sum</div>
<svg style="position:absolute;left:1226.35px;top:467.55px;overflow:visible" width="23.5" height="23.5" viewBox="0 0 24 24" fill="none" stroke="#334155" stroke-width="1.85" ><path d="M8.25 15 12 18.750 15.75 15m-7.5-6L12 5.25 15.750 9" stroke-linecap="round" stroke-linejoin="round"/></svg>
<div style="position:absolute;left:1276px;top:459px;width:299.6px;height:40px;box-sizing:border-box;border:2px solid #101010;border-radius:20px;background:#fafafa;"></div>
<div style="position:absolute;left:1297.37px;top:465px;white-space:pre;line-height:27px;height:27px;font-kerning:none;font-family:'Liberation Sans',sans-serif;font-size:24.48px;font-weight:400;color:#18181b;letter-spacing:0.850px;-webkit-text-stroke:0.4px #18181b;">registered</div>
<div style="position:absolute;left:1482.92px;top:465px;white-space:pre;line-height:27px;height:27px;font-kerning:none;font-family:'Liberation Sans',sans-serif;font-size:24.48px;font-weight:400;color:#334155;letter-spacing:0.824px;-webkit-text-stroke:0.4px #334155;">sum</div>
<svg style="position:absolute;left:1530.25px;top:467.55px;overflow:visible" width="23.5" height="23.5" viewBox="0 0 24 24" fill="none" stroke="#334155" stroke-width="1.85" ><path d="M8.25 15 12 18.750 15.75 15m-7.5-6L12 5.25 15.750 9" stroke-linecap="round" stroke-linejoin="round"/></svg>
<div style="position:absolute;left:763px;top:526px;width:1376px;height:1100px;box-sizing:border-box;border:2px solid #e5e7eb;background:#fff;"></div>
<div style="position:absolute;left:775px;top:537px;width:1352px;height:650px;box-sizing:border-box;border:4px solid #60a5fa;background:#fff;"></div>
<svg style="position:absolute;left:0;top:0" width="2248" height="1470" viewBox="0 0 2248 1470"><line x1="920" x2="920" y1="586" y2="778" stroke="#ddd" stroke-width="2"/><line x1="1004" x2="1004" y1="586" y2="778" stroke="#ddd" stroke-width="2"/><line x1="1086" x2="1086" y1="586" y2="778" stroke="#ddd" stroke-width="2"/><line x1="1170" x2="1170" y1="586" y2="778" stroke="#ddd" stroke-width="2"/><line x1="1252" x2="1252" y1="586" y2="778" stroke="#ddd" stroke-width="2"/><line x1="1336" x2="1336" y1="586" y2="778" stroke="#ddd" stroke-width="2"/><line x1="1420" x2="1420" y1="586" y2="778" stroke="#ddd" stroke-width="2"/><line x1="1502" x2="1502" y1="586" y2="778" stroke="#ddd" stroke-width="2"/><line x1="1586" x2="1586" y1="586" y2="778" stroke="#ddd" stroke-width="2"/><line x1="1668" x2="1668" y1="586" y2="778" stroke="#ddd" stroke-width="2"/><line x1="1752" x2="1752" y1="586" y2="778" stroke="#ddd" stroke-width="2"/><line x1="1834" x2="1834" y1="586" y2="778" stroke="#ddd" stroke-width="2"/><line x1="1918" x2="1918" y1="586" y2="778" stroke="#ddd" stroke-width="2"/><line x1="920" x2="1918" y1="778" y2="778" stroke="#ddd" stroke-width="2"/><line x1="920" x2="1918" y1="714" y2="714" stroke="#ddd" stroke-width="2"/><line x1="920" x2="1918" y1="650" y2="650" stroke="#ddd" stroke-width="2"/><line x1="920" x2="1918" y1="586" y2="586" stroke="#ddd" stroke-width="2"/><line x1="920" x2="920" y1="778" y2="788" stroke="#888" stroke-width="2"/><text x="919" y="807.8" text-anchor="start" style="font-family:'Liberation Sans',sans-serif;font-size:20px" fill="#000">0</text><line x1="1004" x2="1004" y1="778" y2="788" stroke="#888" stroke-width="2"/><text x="1004" y="807.8" text-anchor="middle" style="font-family:'Liberation Sans',sans-serif;font-size:20px" fill="#000">2</text><line x1="1086" x2="1086" y1="778" y2="788" stroke="#888" stroke-width="2"/><text x="1086" y="807.8" text-anchor="middle" style="font-family:'Liberation Sans',sans-serif;font-size:20px" fill="#000">4</text><line x1="1170" x2="1170" y1="778" y2="788" stroke="#888" stroke-width="2"/><text x="1170" y="807.8" text-anchor="middle" style="font-family:'Liberation Sans',sans-serif;font-size:20px" fill="#000">6</text><line x1="1252" x2="1252" y1="778" y2="788" stroke="#888" stroke-width="2"/><text x="1252" y="807.8" text-anchor="middle" style="font-family:'Liberation Sans',sans-serif;font-size:20px" fill="#000">8</text><line x1="1336" x2="1336" y1="778" y2="788" stroke="#888" stroke-width="2"/><text x="1336" y="807.8" text-anchor="middle" style="font-family:'Liberation Sans',sans-serif;font-size:20px" fill="#000">10</text><line x1="1420" x2="1420" y1="778" y2="788" stroke="#888" stroke-width="2"/><text x="1420" y="807.8" text-anchor="middle" style="font-family:'Liberation Sans',sans-serif;font-size:20px" fill="#000">12</text><line x1="1502" x2="1502" y1="778" y2="788" stroke="#888" stroke-width="2"/><text x="1502" y="807.8" text-anchor="middle" style="font-family:'Liberation Sans',sans-serif;font-size:20px" fill="#000">14</text><line x1="1586" x2="1586" y1="778" y2="788" stroke="#888" stroke-width="2"/><text x="1586" y="807.8" text-anchor="middle" style="font-family:'Liberation Sans',sans-serif;font-size:20px" fill="#000">16</text><line x1="1668" x2="1668" y1="778" y2="788" stroke="#888" stroke-width="2"/><text x="1668" y="807.8" text-anchor="middle" style="font-family:'Liberation Sans',sans-serif;font-size:20px" fill="#000">18</text><line x1="1752" x2="1752" y1="778" y2="788" stroke="#888" stroke-width="2"/><text x="1752" y="807.8" text-anchor="middle" style="font-family:'Liberation Sans',sans-serif;font-size:20px" fill="#000">20</text><line x1="1834" x2="1834" y1="778" y2="788" stroke="#888" stroke-width="2"/><text x="1834" y="807.8" text-anchor="middle" style="font-family:'Liberation Sans',sans-serif;font-size:20px" fill="#000">22</text><line x1="1918" x2="1918" y1="778" y2="788" stroke="#888" stroke-width="2"/><text x="1919" y="807.8" text-anchor="end" style="font-family:'Liberation Sans',sans-serif;font-size:20px" fill="#000">24</text><line x1="919" x2="1919" y1="778" y2="778" stroke="#888" stroke-width="2"/><line x1="910" x2="920" y1="778" y2="778" stroke="#888" stroke-width="2"/><text x="906" y="784.4" text-anchor="end" style="font-family:'Liberation Sans',sans-serif;font-size:20px" fill="#000">0</text><line x1="910" x2="920" y1="714" y2="714" stroke="#888" stroke-width="2"/><text x="906" y="720.4" text-anchor="end" style="font-family:'Liberation Sans',sans-serif;font-size:20px" fill="#000">20,000</text><line x1="910" x2="920" y1="650" y2="650" stroke="#888" stroke-width="2"/><text x="906" y="656.4" text-anchor="end" style="font-family:'Liberation Sans',sans-serif;font-size:20px" fill="#000">40,000</text><line x1="910" x2="920" y1="586" y2="586" stroke="#888" stroke-width="2"/><text x="906" y="592.4" text-anchor="end" style="font-family:'Liberation Sans',sans-serif;font-size:20px" fill="#000">60,000</text><line x1="920" x2="920" y1="585" y2="779" stroke="#888" stroke-width="2"/><path d="M919.0,775.0L960.6,775.8L1002.2,776.1L1043.8,776.4L1085.3,776.8L1126.9,776.8L1168.5,776.1L1210.1,774.5L1251.7,772.9L1293.2,771.0L1334.8,768.6L1376.4,764.9L1418.0,762.0L1459.6,760.6L1501.2,759.8L1542.8,760.1L1584.3,761.4L1625.9,764.9L1667.5,769.2L1709.1,771.0L1750.7,772.6L1792.2,773.4L1833.8,774.0L1875.4,774.5L1875.4,777.0L1833.8,777.0L1792.2,777.0L1750.7,777.0L1709.1,777.0L1667.5,777.0L1625.9,777.0L1584.3,777.0L1542.8,777.0L1501.2,777.0L1459.6,777.0L1418.0,777.0L1376.4,777.0L1334.8,777.0L1293.2,777.0L1251.7,777.0L1210.1,777.0L1168.5,777.0L1126.9,777.0L1085.3,777.0L1043.8,777.0L1002.2,777.0L960.6,777.0L919.0,777.0Z" fill="#f6bd16" fill-opacity="0.95"/><path d="M919.0,766.1L960.6,769.8L1002.2,772.2L1043.8,774.4L1085.3,775.7L1126.9,775.8L1168.5,772.1L1210.1,764.9L1251.7,753.2L1293.2,744.1L1334.8,729.7L1376.4,717.5L1418.0,709.5L1459.6,707.3L1501.2,704.7L1542.8,707.0L1584.3,706.3L1625.9,705.0L1667.5,714.3L1709.1,721.7L1750.7,733.2L1792.2,742.5L1833.8,750.8L1875.4,759.1L1875.4,774.5L1833.8,774.0L1792.2,773.4L1750.7,772.6L1709.1,771.0L1667.5,769.2L1625.9,764.9L1584.3,761.4L1542.8,760.1L1501.2,759.8L1459.6,760.6L1418.0,762.0L1376.4,764.9L1334.8,768.6L1293.2,771.0L1251.7,772.9L1210.1,774.5L1168.5,776.1L1126.9,776.8L1085.3,776.8L1043.8,776.4L1002.2,776.1L960.6,775.8L919.0,775.0Z" fill="#65789b" fill-opacity="0.95"/><path d="M919.0,760.0L960.6,765.5L1002.2,769.1L1043.8,772.7L1085.3,774.9L1126.9,775.1L1168.5,769.7L1210.1,756.9L1251.7,739.3L1293.2,724.0L1334.8,698.0L1376.4,677.5L1418.0,663.1L1459.6,657.4L1501.2,652.2L1542.8,652.6L1584.3,653.8L1625.9,651.3L1667.5,670.5L1709.1,688.7L1750.7,710.8L1792.2,725.5L1833.8,737.7L1875.4,750.0L1875.4,759.1L1833.8,750.8L1792.2,742.5L1750.7,733.2L1709.1,721.7L1667.5,714.3L1625.9,705.0L1584.3,706.3L1542.8,707.0L1501.2,704.7L1459.6,707.3L1418.0,709.5L1376.4,717.5L1334.8,729.7L1293.2,744.1L1251.7,753.2L1210.1,764.9L1168.5,772.1L1126.9,775.8L1085.3,775.7L1043.8,774.4L1002.2,772.2L960.6,769.8L919.0,766.1Z" fill="#61ddaa" fill-opacity="0.95"/><path d="M919.0,753.8L960.6,762.5L1002.2,766.5L1043.8,771.1L1085.3,774.1L1126.9,774.4L1168.5,767.3L1210.1,751.2L1251.7,725.9L1293.2,705.7L1334.8,667.9L1376.4,638.5L1418.0,617.5L1459.6,608.4L1501.2,600.7L1542.8,602.3L1584.3,604.7L1625.9,603.6L1667.5,634.6L1709.1,663.1L1750.7,693.4L1792.2,711.8L1833.8,726.0L1875.4,741.5L1875.4,750.0L1833.8,737.7L1792.2,725.5L1750.7,710.8L1709.1,688.7L1667.5,670.5L1625.9,651.3L1584.3,653.8L1542.8,652.6L1501.2,652.2L1459.6,657.4L1418.0,663.1L1376.4,677.5L1334.8,698.0L1293.2,724.0L1251.7,739.3L1210.1,756.9L1168.5,769.7L1126.9,775.1L1085.3,774.9L1043.8,772.7L1002.2,769.1L960.6,765.5L919.0,760.0Z" fill="#5b8ff9" fill-opacity="0.95"/><text x="1419" y="838" text-anchor="middle" style="font-family:'Liberation Sans',sans-serif;font-size:22px;font-weight:bold" fill="#000">hour</text><text transform="translate(834.3,682) rotate(-90)" text-anchor="middle" style="font-family:'Liberation Sans',sans-serif;font-size:22px;font-weight:bold" fill="#000">sum(casual)</text><text x="1952.6" y="602.6" style="font-family:'Liberation Sans',sans-serif;font-size:22px;font-weight:bold" fill="#000">season</text><circle cx="1965" cy="629" r="10" fill="#5b8ff9" fill-opacity="0.95"/><text x="1985" y="635.2" style="font-family:'Liberation Sans',sans-serif;font-size:20px" fill="#000">fall</text><circle cx="1965" cy="655" r="10" fill="#61ddaa" fill-opacity="0.95"/><text x="1985" y="661.2" style="font-family:'Liberation Sans',sans-serif;font-size:20px" fill="#000">spring</text><circle cx="1965" cy="681" r="10" fill="#65789b" fill-opacity="0.95"/><text x="1985" y="687.2" style="font-family:'Liberation Sans',sans-serif;font-size:20px" fill="#000">summer</text><circle cx="1965" cy="707" r="10" fill="#f6bd16" fill-opacity="0.95"/><text x="1985" y="713.2" style="font-family:'Liberation Sans',sans-serif;font-size:20px" fill="#000">winter</text><line x1="932" x2="932" y1="872" y2="1064" stroke="#ddd" stroke-width="2"/><line x1="1014" x2="1014" y1="872" y2="1064" stroke="#ddd" stroke-width="2"/><line x1="1096" x2="1096" y1="872" y2="1064" stroke="#ddd" stroke-width="2"/><line x1="1178" x2="1178" y1="872" y2="1064" stroke="#ddd" stroke-width="2"/><line x1="1260" x2="1260" y1="872" y2="1064" stroke="#ddd" stroke-width="2"/><line x1="1342" x2="1342" y1="872" y2="1064" stroke="#ddd" stroke-width="2"/><line x1="1426" x2="1426" y1="872" y2="1064" stroke="#ddd" stroke-width="2"/><line x1="1508" x2="1508" y1="872" y2="1064" stroke="#ddd" stroke-width="2"/><line x1="1590" x2="1590" y1="872" y2="1064" stroke="#ddd" stroke-width="2"/><line x1="1672" x2="1672" y1="872" y2="1064" stroke="#ddd" stroke-width="2"/><line x1="1754" x2="1754" y1="872" y2="1064" stroke="#ddd" stroke-width="2"/><line x1="1836" x2="1836" y1="872" y2="1064" stroke="#ddd" stroke-width="2"/><line x1="1918" x2="1918" y1="872" y2="1064" stroke="#ddd" stroke-width="2"/><line x1="932" x2="1918" y1="1064" y2="1064" stroke="#ddd" stroke-width="2"/><line x1="932" x2="1918" y1="1000" y2="1000" stroke="#ddd" stroke-width="2"/><line x1="932" x2="1918" y1="936" y2="936" stroke="#ddd" stroke-width="2"/><line x1="932" x2="1918" y1="872" y2="872" stroke="#ddd" stroke-width="2"/><line x1="932" x2="932" y1="1064" y2="1074" stroke="#888" stroke-width="2"/><text x="931" y="1093.8" text-anchor="start" style="font-family:'Liberation Sans',sans-serif;font-size:20px" fill="#000">0</text><line x1="1014" x2="1014" y1="1064" y2="1074" stroke="#888" stroke-width="2"/><text x="1014" y="1093.8" text-anchor="middle" style="font-family:'Liberation Sans',sans-serif;font-size:20px" fill="#000">2</text><line x1="1096" x2="1096" y1="1064" y2="1074" stroke="#888" stroke-width="2"/><text x="1096" y="1093.8" text-anchor="middle" style="font-family:'Liberation Sans',sans-serif;font-size:20px" fill="#000">4</text><line x1="1178" x2="1178" y1="1064" y2="1074" stroke="#888" stroke-width="2"/><text x="1178" y="1093.8" text-anchor="middle" style="font-family:'Liberation Sans',sans-serif;font-size:20px" fill="#000">6</text><line x1="1260" x2="1260" y1="1064" y2="1074" stroke="#888" stroke-width="2"/><text x="1260" y="1093.8" text-anchor="middle" style="font-family:'Liberation Sans',sans-serif;font-size:20px" fill="#000">8</text><line x1="1342" x2="1342" y1="1064" y2="1074" stroke="#888" stroke-width="2"/><text x="1342" y="1093.8" text-anchor="middle" style="font-family:'Liberation Sans',sans-serif;font-size:20px" fill="#000">10</text><line x1="1426" x2="1426" y1="1064" y2="1074" stroke="#888" stroke-width="2"/><text x="1426" y="1093.8" text-anchor="middle" style="font-family:'Liberation Sans',sans-serif;font-size:20px" fill="#000">12</text><line x1="1508" x2="1508" y1="1064" y2="1074" stroke="#888" stroke-width="2"/><text x="1508" y="1093.8" text-anchor="middle" style="font-family:'Liberation Sans',sans-serif;font-size:20px" fill="#000">14</text><line x1="1590" x2="1590" y1="1064" y2="1074" stroke="#888" stroke-width="2"/><text x="1590" y="1093.8" text-anchor="middle" style="font-family:'Liberation Sans',sans-serif;font-size:20px" fill="#000">16</text><line x1="1672" x2="1672" y1="1064" y2="1074" stroke="#888" stroke-width="2"/><text x="1672" y="1093.8" text-anchor="middle" style="font-family:'Liberation Sans',sans-serif;font-size:20px" fill="#000">18</text><line x1="1754" x2="1754" y1="1064" y2="1074" stroke="#888" stroke-width="2"/><text x="1754" y="1093.8" text-anchor="middle" style="font-family:'Liberation Sans',sans-serif;font-size:20px" fill="#000">20</text><line x1="1836" x2="1836" y1="1064" y2="1074" stroke="#888" stroke-width="2"/><text x="1836" y="1093.8" text-anchor="middle" style="font-family:'Liberation Sans',sans-serif;font-size:20px" fill="#000">22</text><line x1="1918" x2="1918" y1="1064" y2="1074" stroke="#888" stroke-width="2"/><text x="1919" y="1093.8" text-anchor="end" style="font-family:'Liberation Sans',sans-serif;font-size:20px" fill="#000">24</text><line x1="931" x2="1919" y1="1064" y2="1064" stroke="#888" stroke-width="2"/><line x1="922" x2="932" y1="1064" y2="1064" stroke="#888" stroke-width="2"/><text x="918" y="1070.4" text-anchor="end" style="font-family:'Liberation Sans',sans-serif;font-size:20px" fill="#000">0</text><line x1="922" x2="932" y1="1000" y2="1000" stroke="#888" stroke-width="2"/><text x="918" y="1006.4" text-anchor="end" style="font-family:'Liberation Sans',sans-serif;font-size:20px" fill="#000">100,000</text><line x1="922" x2="932" y1="936" y2="936" stroke="#888" stroke-width="2"/><text x="918" y="942.4" text-anchor="end" style="font-family:'Liberation Sans',sans-serif;font-size:20px" fill="#000">200,000</text><line x1="922" x2="932" y1="872" y2="872" stroke="#888" stroke-width="2"/><text x="918" y="878.4" text-anchor="end" style="font-family:'Liberation Sans',sans-serif;font-size:20px" fill="#000">300,000</text><line x1="932" x2="932" y1="871" y2="1065" stroke="#888" stroke-width="2"/><path d="M931.0,1060.0L972.1,1061.4L1013.2,1062.1L1054.2,1063.0L1095.3,1063.0L1136.4,1062.4L1177.5,1058.0L1218.6,1048.4L1259.7,1034.7L1300.8,1046.4L1341.8,1052.5L1382.9,1050.9L1424.0,1047.7L1465.1,1047.7L1506.2,1049.1L1547.2,1048.0L1588.3,1044.0L1629.4,1034.4L1670.5,1036.7L1711.6,1044.4L1752.7,1050.4L1793.8,1053.1L1834.8,1055.7L1875.9,1058.0L1875.9,1063.0L1834.8,1063.0L1793.8,1063.0L1752.7,1063.0L1711.6,1063.0L1670.5,1063.0L1629.4,1063.0L1588.3,1063.0L1547.2,1063.0L1506.2,1063.0L1465.1,1063.0L1424.0,1063.0L1382.9,1063.0L1341.8,1063.0L1300.8,1063.0L1259.7,1063.0L1218.6,1063.0L1177.5,1063.0L1136.4,1063.0L1095.3,1063.0L1054.2,1063.0L1013.2,1063.0L972.1,1063.0L931.0,1063.0Z" fill="#f6bd16" fill-opacity="0.95"/><path d="M931.0,1053.9L972.1,1057.6L1013.2,1059.5L1054.2,1061.8L1095.3,1062.7L1136.4,1059.6L1177.5,1047.2L1218.6,1018.3L1259.7,988.7L1300.8,1022.0L1341.8,1035.6L1382.9,1031.5L1424.0,1023.6L1465.1,1024.4L1506.2,1027.5L1547.2,1025.2L1588.3,1011.9L1629.4,979.1L1670.5,983.6L1711.6,1005.2L1752.7,1020.2L1793.8,1030.3L1834.8,1038.3L1875.9,1046.7L1875.9,1058.0L1834.8,1055.7L1793.8,1053.1L1752.7,1050.4L1711.6,1044.4L1670.5,1036.7L1629.4,1034.4L1588.3,1044.0L1547.2,1048.0L1506.2,1049.1L1465.1,1047.7L1424.0,1047.7L1382.9,1050.9L1341.8,1052.5L1300.8,1046.4L1259.7,1034.7L1218.6,1048.4L1177.5,1058.0L1136.4,1062.4L1095.3,1063.0L1054.2,1063.0L1013.2,1062.1L972.1,1061.4L931.0,1060.0Z" fill="#65789b" fill-opacity="0.95"/><path d="M931.0,1049.3L972.1,1054.7L1013.2,1057.6L1054.2,1060.8L1095.3,1062.1L1136.4,1057.6L1177.5,1039.7L1218.6,995.1L1259.7,949.9L1300.8,999.6L1341.8,1021.5L1382.9,1014.7L1424.0,1002.3L1465.1,1002.8L1506.2,1008.7L1547.2,1005.6L1588.3,984.6L1629.4,933.7L1670.5,940.3L1711.6,974.3L1752.7,998.6L1793.8,1013.5L1834.8,1025.5L1875.9,1038.3L1875.9,1046.7L1834.8,1038.3L1793.8,1030.3L1752.7,1020.2L1711.6,1005.2L1670.5,983.6L1629.4,979.1L1588.3,1011.9L1547.2,1025.2L1506.2,1027.5L1465.1,1024.4L1424.0,1023.6L1382.9,1031.5L1341.8,1035.6L1300.8,1022.0L1259.7,988.7L1218.6,1018.3L1177.5,1047.2L1136.4,1059.6L1095.3,1062.7L1054.2,1061.8L1013.2,1059.5L972.1,1057.6L931.0,1053.9Z" fill="#61ddaa" fill-opacity="0.95"/><path d="M931.0,1043.5L972.1,1051.2L1013.2,1055.5L1054.2,1059.5L1095.3,1061.4L1136.4,1055.2L1177.5,1030.3L1218.6,968.6L1259.7,906.6L1300.8,975.6L1341.8,1003.9L1382.9,994.0L1424.0,977.2L1465.1,978.8L1506.2,986.2L1547.2,981.1L1588.3,951.8L1629.4,882.1L1670.5,893.8L1711.6,940.9L1752.7,975.0L1793.8,996.7L1834.8,1012.7L1875.9,1029.6L1875.9,1038.3L1834.8,1025.5L1793.8,1013.5L1752.7,998.6L1711.6,974.3L1670.5,940.3L1629.4,933.7L1588.3,984.6L1547.2,1005.6L1506.2,1008.7L1465.1,1002.8L1424.0,1002.3L1382.9,1014.7L1341.8,1021.5L1300.8,999.6L1259.7,949.9L1218.6,995.1L1177.5,1039.7L1136.4,1057.6L1095.3,1062.1L1054.2,1060.8L1013.2,1057.6L972.1,1054.7L931.0,1049.3Z" fill="#5b8ff9" fill-opacity="0.95"/><text x="1425" y="1124" text-anchor="middle" style="font-family:'Liberation Sans',sans-serif;font-size:22px;font-weight:bold" fill="#000">hour</text><text transform="translate(834.3,968) rotate(-90)" text-anchor="middle" style="font-family:'Liberation Sans',sans-serif;font-size:22px;font-weight:bold" fill="#000">sum(registered)</text><text x="1952.6" y="888.6" style="font-family:'Liberation Sans',sans-serif;font-size:22px;font-weight:bold" fill="#000">season</text><circle cx="1965" cy="915" r="10" fill="#5b8ff9" fill-opacity="0.95"/><text x="1985" y="921.2" style="font-family:'Liberation Sans',sans-serif;font-size:20px" fill="#000">fall</text><circle cx="1965" cy="941" r="10" fill="#61ddaa" fill-opacity="0.95"/><text x="1985" y="947.2" style="font-family:'Liberation Sans',sans-serif;font-size:20px" fill="#000">spring</text><circle cx="1965" cy="967" r="10" fill="#65789b" fill-opacity="0.95"/><text x="1985" y="973.2" style="font-family:'Liberation Sans',sans-serif;font-size:20px" fill="#000">summer</text><circle cx="1965" cy="993" r="10" fill="#f6bd16" fill-opacity="0.95"/><text x="1985" y="999.2" style="font-family:'Liberation Sans',sans-serif;font-size:20px" fill="#000">winter</text></svg>
</div></body></html>
